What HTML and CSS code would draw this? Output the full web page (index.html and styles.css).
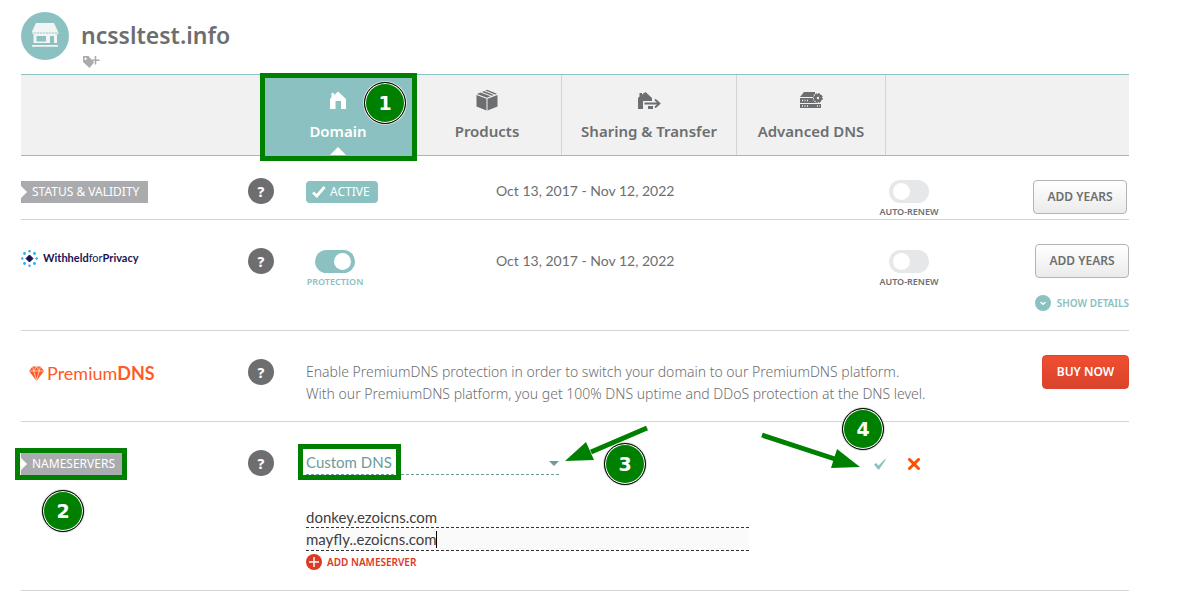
FILE: index.html
```html
<!DOCTYPE html>
<html lang="en">
<head>
  <meta charset="UTF-8" />
  <meta name="viewport" content="width=device-width, initial-scale=1.0" />
  <title>ncssltest.info - Domain</title>
  <link rel="stylesheet" href="styles.css">
</head>
<body>
  <div class="page">
    <header class="header">
      <svg class="shop" viewBox="0 0 48 48" aria-hidden="true">
        <circle cx="24" cy="24" r="24" fill="#8bc1c1"/>
        <path fill="#f3f4f4" d="M15 11h18l4 8.500v1H11v-1z"/>
        <path fill="none" stroke="#f3f4f4" stroke-width="1.500" stroke-dasharray="2 1" d="M11.500 21.200h26"/>
        <path fill="#f3f4f4" fill-rule="evenodd" d="M12.500 22H36V31h-3v-7h-4v7H12.500zM15.500 24v5.500H25V24zM11 33h26v1.800H11z"/>
      </svg>
      <div>
        <h1>ncssltest.info</h1>
        <button class="add-tag" type="button" aria-label="Add tag">
          <svg width="17" height="13" viewBox="0 0 17 13">
            <path fill="#aaabae" fill-rule="evenodd" d="M0 0h5.500L11 6.500 6.500 12 0 6zM2.500 1.500a1.200 1.200 0 1 0 .1 0z"/>
            <path stroke="#aaabae" stroke-width="1.500" d="M12.500 0v8.500M8.500 4.200h8"/>
          </svg>
        </button>
      </div>
    </header>

    <nav class="tabs">
      <a class="tab active" href="#domain">
        <svg width="18" height="20" viewBox="0 0 18 20"><path fill="currentColor" d="M9 .5 17 8v10h-5v-8H6.500v8H1V8l1.500-1.500V2H5v2.200z"/></svg>
        Domain
        <span class="frame frame-tab"></span>
        <span class="step step-1">1</span>
      </a>
      <a class="tab" href="#products">
        <svg width="22" height="22" viewBox="0 0 22 22">
          <path fill="currentColor" d="M.5 6 10.500 9.700V21.500L.5 17.500zM21.500 6 11.500 9.700V21.500l10-4zM1 5 4.500 3.500 14.500 7.300 11 8.800zM6 2.900 8 2.100l9.800 3.800-2 .8zM9.500 1.500 11 .8l10 4L19 5.400z"/>
        </svg>
        Products
      </a>
      <a class="tab tab-wide" href="#sharing">
        <svg width="24" height="20" viewBox="0 0 24 20">
          <path fill="currentColor" d="M1 18V7L2.500 5.500V2H5v1.500L8.500 1 15 7v3H6v8zM11 15h5v3h-5z"/>
          <path fill="none" stroke="currentColor" stroke-width="1.800" d="M7.500 12.500H22M18 8.500l4.500 4-4.500 4"/>
        </svg>
        Sharing &amp; Transfer
      </a>
      <a class="tab" href="#advanced">
        <svg width="24" height="20" viewBox="0 0 24 20">
          <path fill="currentColor" d="M5 1h11v5H1zM1 7h15l5 3v2H1zM1 13h21v4H1z"/>
          <circle cx="19" cy="7" r="5" fill="#f1f1f1"/>
          <circle cx="19" cy="7" r="2.700" fill="none" stroke="currentColor" stroke-width="3"/>
          <circle cx="19" cy="7" r="4.400" fill="none" stroke="currentColor" stroke-width="1" stroke-dasharray="2 1.400"/>
          <path stroke="#f1f1f1" stroke-width="1.500" stroke-dasharray="1 1.500" d="M3 9.500h6M3 15h6M18 15h3"/>
        </svg>
        Advanced DNS
      </a>
    </nav>

    <section class="row row-status">
      <div class="name"><span class="ribbon">STATUS &amp; VALIDITY</span></div>
      <div class="hint"><button class="help" type="button">?</button></div>
      <div class="state">
        <span class="badge">
          <svg width="14" height="12" viewBox="0 0 14 12"><path fill="none" stroke="#fff" stroke-width="2.800" d="M1 6.500 4.800 10 12.500 1"/></svg>
          ACTIVE
        </span>
      </div>
      <div class="dates">Oct 13, 2017 - Nov 12, 2022</div>
      <label class="renew"><input class="switch" type="checkbox">AUTO-RENEW</label>
      <div class="actions"><button class="btn" type="button">ADD YEARS</button></div>
    </section>

    <section class="row row-privacy">
      <div class="name">
        <span class="privacy">
          <svg width="17" height="17" viewBox="0 0 17 17">
            <g fill="#1fb0ee">
              <circle cx="8.500" cy="1.300" r="1.200"/><circle cx="8.500" cy="15.700" r="1.200"/>
              <circle cx="1.300" cy="8.500" r="1.200"/><circle cx="15.700" cy="8.500" r="1.200"/>
              <circle cx="3.500" cy="3.500" r="1.400"/><circle cx="13.500" cy="3.500" r="1.400"/>
              <circle cx="3.500" cy="13.500" r="1.400"/><circle cx="13.500" cy="13.500" r="1.400"/>
            </g>
            <path fill="#1b1252" stroke="#1b1252" stroke-linejoin="round" d="M8.500 5 12 8.500 8.500 12 5 8.500z"/>
          </svg>
          <span><b>Withheld</b>for<b>Privacy</b></span>
        </span>
      </div>
      <div class="hint"><button class="help" type="button">?</button></div>
      <div class="state"><label class="protection"><input class="switch" type="checkbox" checked>PROTECTION</label></div>
      <div class="dates">Oct 13, 2017 - Nov 12, 2022</div>
      <label class="renew"><input class="switch" type="checkbox">AUTO-RENEW</label>
      <div class="actions">
        <button class="btn" type="button">ADD YEARS</button>
        <a class="details" href="#details">
          <svg width="16" height="16" viewBox="0 0 16 16"><circle cx="8" cy="8" r="8" fill="#8bc1c1"/><path fill="none" stroke="#fff" stroke-width="1.300" d="m5.500 7 2.500 2.300L10.500 7"/></svg>
          SHOW DETAILS
        </a>
      </div>
    </section>

    <section class="row row-premium">
      <div class="name">
        <span class="premium">
          <svg width="15" height="15" viewBox="0 0 15 15">
            <path fill="#ff5a26" d="M3.500.5h8L15 5 7.500 15 0 5z"/>
            <path fill="none" stroke="#fff" stroke-width=".6" d="M0 5h15M3.500.5 4.800 5 7.500.5 10.200 5l1.300-4.500M4.800 5l2.700 9.500L10.200 5"/>
          </svg>
          <span>Premium<b>DNS</b></span>
        </span>
      </div>
      <div class="hint"><button class="help" type="button">?</button></div>
      <p class="about">Enable PremiumDNS protection in order to switch your domain to our PremiumDNS platform.<br>With our PremiumDNS platform, you get 100% DNS uptime and DDoS protection at the DNS level.</p>
      <div class="actions"><button class="btn btn-buy" type="button">BUY NOW</button></div>
    </section>

    <section class="row row-servers">
      <div class="name">
        <span class="ribbon">NAMESERVERS<span class="frame frame-ribbon"></span></span>
        <span class="step step-2">2</span>
      </div>
      <div class="hint"><button class="help" type="button">?</button></div>
      <div class="servers">
        <div class="dns-type">
          <select aria-label="Nameserver type"><option>Custom DNS</option></select>
          <span class="frame frame-select"></span>
          <svg class="arrow arrow-3" width="84" height="38" viewBox="0 0 84 38"><path stroke="#008000" stroke-width="5" d="M82 3 26 27"/><path fill="#008000" d="M0 36 21 17l8 18z"/></svg>
          <span class="step step-3">3</span>
        </div>
        <input class="server" type="text" value="donkey.ezoicns.com" aria-label="Nameserver 1">
        <div class="editing">
          <input class="server" type="text" value="mayfly..ezoicns.com" aria-label="Nameserver 2">
          <span class="caret"></span>
        </div>
        <button class="add-server" type="button">
          <svg width="16" height="16" viewBox="0 0 16 16"><circle cx="8" cy="8" r="8" fill="#dc3926"/><path stroke="#fff" stroke-width="1.400" d="M8 3v10M3 8h10"/></svg>
          ADD NAMESERVER
        </button>
      </div>
      <div class="confirm">
        <button type="button" aria-label="Save">
          <svg width="14" height="12" viewBox="0 0 14 12"><path fill="#8bc1c1" d="M1 6.500 3 5l2.500 2.500L12 1l1 .5L6 11.500H5z"/></svg>
        </button>
        <button type="button" aria-label="Cancel">
          <svg width="14" height="12" viewBox="0 0 14 12"><path stroke="#ff5000" stroke-width="3" stroke-linecap="round" d="m2.500 1.500 9 9M11.500 1.500l-9 9"/></svg>
        </button>
        <svg class="arrow arrow-4" width="100" height="38" viewBox="0 0 100 38"><path stroke="#008000" stroke-width="5" d="M1 3 74 27"/><path fill="#008000" d="M99 35 76 17l-6 19z"/></svg>
        <span class="step step-4">4</span>
      </div>
    </section>
  </div>
</body>
</html>
```
FILE: styles.css
```css
* {
  box-sizing: border-box;
}

body {
  margin: 0;
  background: #fff;
  color: #6d6e70;
  font-family: 'Noto Sans', sans-serif;
  font-size: 14px;
  line-height: 22px;
}

button,
input,
select {
  font-family: inherit;
}

button {
  padding: 0;
  border: none;
  background: none;
  cursor: pointer;
}

svg {
  display: block;
  flex: none;
}

.page {
  padding: 12px 56px 0 21px;
}

/* header */
.header {
  display: flex;
  gap: 12px;
  height: 62px;
}

.shop {
  width: 48px;
  height: 48px;
}

h1 {
  margin: 8px 0 6px;
  font-size: 23px;
  line-height: 30px;
  font-weight: 600;
}

.add-tag {
  display: block;
  margin-left: 2px;
}

/* tabs */
.tabs {
  display: flex;
  height: 82px;
  padding-left: 242px;
  background: #f1f1f1;
  border-top: 1px solid #8bc1c1;
  border-bottom: 1px solid #8bc1c1;
}

.tab {
  position: relative;
  display: flex;
  flex-direction: column;
  align-items: center;
  justify-content: flex-end;
  gap: 9px;
  width: 149px;
  padding-bottom: 13px;
  border-right: 1px solid #d4d4d4;
  color: #6d6e70;
  font-size: 15px;
  font-weight: 600;
  text-decoration: none;
  white-space: nowrap;
}

.tab-wide {
  width: 175px;
}

.tab.active {
  width: 150px;
  background: #8bc1c1;
  border-right: none;
  color: #fff;
}

.tab.active::after {
  content: '';
  position: absolute;
  bottom: 0;
  left: 67px;
  border: 8px solid transparent;
  border-top: none;
  border-bottom-color: #fff;
}

/* rows */
.row {
  display: grid;
  grid-template-columns: 227px 58px 190px 1fr 72px 184px;
  align-items: start;
  padding-top: 22px;
  border-bottom: 1px solid #d4d4d4;
}

.row-status {
  min-height: 64px;
}

.row-privacy {
  min-height: 111px;
}

.row-premium {
  min-height: 91px;
}

.row-servers {
  min-height: 169px;
}

.row-privacy > *,
.row-premium > *,
.row-servers > * {
  margin-top: 6px;
}

.name {
  position: relative;
  padding-top: 3px;
}

.ribbon {
  position: relative;
  display: inline-block;
  padding: 0 9px 0 11px;
  background: #aaabae;
  color: #fff;
  font-size: 12px;
  vertical-align: top;
}

.ribbon::before {
  content: '';
  position: absolute;
  top: 5px;
  left: 0;
  border: 6px solid transparent;
  border-left-color: #fff;
  border-right: none;
}

.help {
  display: block;
  width: 26px;
  height: 26px;
  border-radius: 50%;
  background: #6d6e70;
  color: #fff;
  font-size: 14px;
  font-weight: 800;
}

.badge {
  display: inline-flex;
  align-items: center;
  gap: 4px;
  height: 22px;
  margin-top: 3px;
  padding: 0 8px 0 6px;
  border-radius: 4px;
  background: #8bc1c1;
  color: #fff;
  font-size: 12px;
}

.dates {
  padding-top: 2px;
  font-family: 'Lato', sans-serif;
}

.renew,
.protection {
  display: flex;
  flex-direction: column;
  align-items: center;
  gap: 3px;
  padding-top: 2px;
  font-size: 9px;
  line-height: 12px;
  font-weight: 600;
}

.protection {
  width: 58px;
  color: #8bc1c1;
}

.switch {
  appearance: none;
  display: flex;
  align-items: center;
  width: 40px;
  height: 23px;
  margin: 0;
  padding: 0 4px;
  border-radius: 12px;
  background: #e6e7e8;
}

.switch::before {
  content: '';
  width: 17px;
  height: 17px;
  border-radius: 50%;
  background: #fff;
}

.switch:checked {
  justify-content: flex-end;
  background: #8bc1c1;
}

.actions {
  display: flex;
  flex-direction: column;
  align-items: flex-end;
  grid-column: 6;
}

.row .actions {
  margin-top: 2px;
}

.row-status .actions {
  padding-right: 2px;
}

.btn {
  width: 94px;
  height: 34px;
  padding-bottom: 2px;
  border: 1px solid #b3b4b6;
  border-radius: 4px;
  background: linear-gradient(#fff, #ebebeb);
  color: #6d6e70;
  font-size: 12px;
  font-weight: 600;
}

.btn-buy {
  width: 87px;
  border-color: #dd452c;
  background: linear-gradient(#f04e30, #d8432c);
  color: #fff;
}

.details {
  display: flex;
  align-items: center;
  gap: 6px;
  margin-top: 14px;
  color: #8bc1c1;
  font-size: 10px;
  font-weight: 600;
  text-decoration: none;
}

.privacy {
  display: flex;
  align-items: center;
  gap: 5px;
  margin-top: -4px;
  color: #1b1252;
  font-family: 'Lato', sans-serif;
  font-size: 11px;
}

.premium {
  display: flex;
  align-items: center;
  gap: 3px;
  padding-left: 8px;
  color: #ff5a26;
  font-family: 'Lato', sans-serif;
  font-size: 18px;
}

.about {
  grid-column: 3 / 6;
  margin-bottom: 0;
  padding-top: 2px;
  font-weight: 300;
  white-space: nowrap;
}

/* nameservers */
.servers {
  grid-column: 3 / 5;
}

.dns-type {
  position: relative;
  width: 253px;
  margin-bottom: 31px;
}

.dns-type::after {
  content: '';
  position: absolute;
  top: 11px;
  right: 0;
  border: 5px solid transparent;
  border-top-color: #6d9a9a;
  border-bottom: none;
}

.dns-type select {
  appearance: none;
  display: block;
  width: 100%;
  height: 25px;
  padding: 0;
  border: none;
  border-bottom: 1px dashed #6d9a9a;
  background: none;
  color: #6d9a9a;
  font-family: 'Lato', sans-serif;
  font-size: 15px;
}

.server {
  display: block;
  width: 443px;
  height: 22px;
  padding: 0;
  border: none;
  border-bottom: 1px dashed #333;
  background: none;
  color: #414042;
  font-family: 'Lato', sans-serif;
  font-size: 15px;
}

.editing {
  position: relative;
}

.editing .server {
  height: 23px;
  background: #fafafa;
}

.caret {
  position: absolute;
  top: 3px;
  left: 130px;
  width: 1px;
  height: 17px;
  background: #000;
}

.add-server {
  display: flex;
  align-items: center;
  gap: 5px;
  margin-top: 3px;
  color: #dc3926;
  font-size: 10px;
  font-weight: 600;
}

.confirm {
  position: relative;
  display: flex;
  gap: 20px;
  padding-top: 8px;
}

/* walkthrough marks */
.frame {
  position: absolute;
  border: 5px solid #008000;
}

.frame-tab {
  top: -2px;
  left: -3px;
  width: 157px;
  height: 88px;
  z-index: 1;
}

.frame-ribbon {
  top: -5px;
  left: -6px;
  right: -3px;
  bottom: -5px;
}

.frame-select {
  top: -6px;
  left: -8px;
  width: 103px;
  height: 36px;
}

.step {
  position: absolute;
  z-index: 2;
  width: 42px;
  height: 42px;
  border: 1px solid #000;
  border-radius: 50%;
  background: #008000;
  box-shadow: inset 0 0 0 1px #fff, 0 0 0 1px #ddd;
  color: #fff;
  font-family: 'DejaVu Sans', sans-serif;
  font-size: 19px;
  line-height: 40px;
  font-weight: 700;
  text-align: center;
}

.step-1 {
  top: 7px;
  left: 101px;
}

.step-2 {
  top: 40px;
  left: 21px;
}

.step-3 {
  top: -7px;
  left: 298px;
}

.step-4 {
  top: -42px;
  left: -31px;
}

.arrow {
  position: absolute;
}

.arrow-3 {
  top: -25px;
  left: 259px;
}

.arrow-4 {
  top: -18px;
  left: -112px;
}
```
